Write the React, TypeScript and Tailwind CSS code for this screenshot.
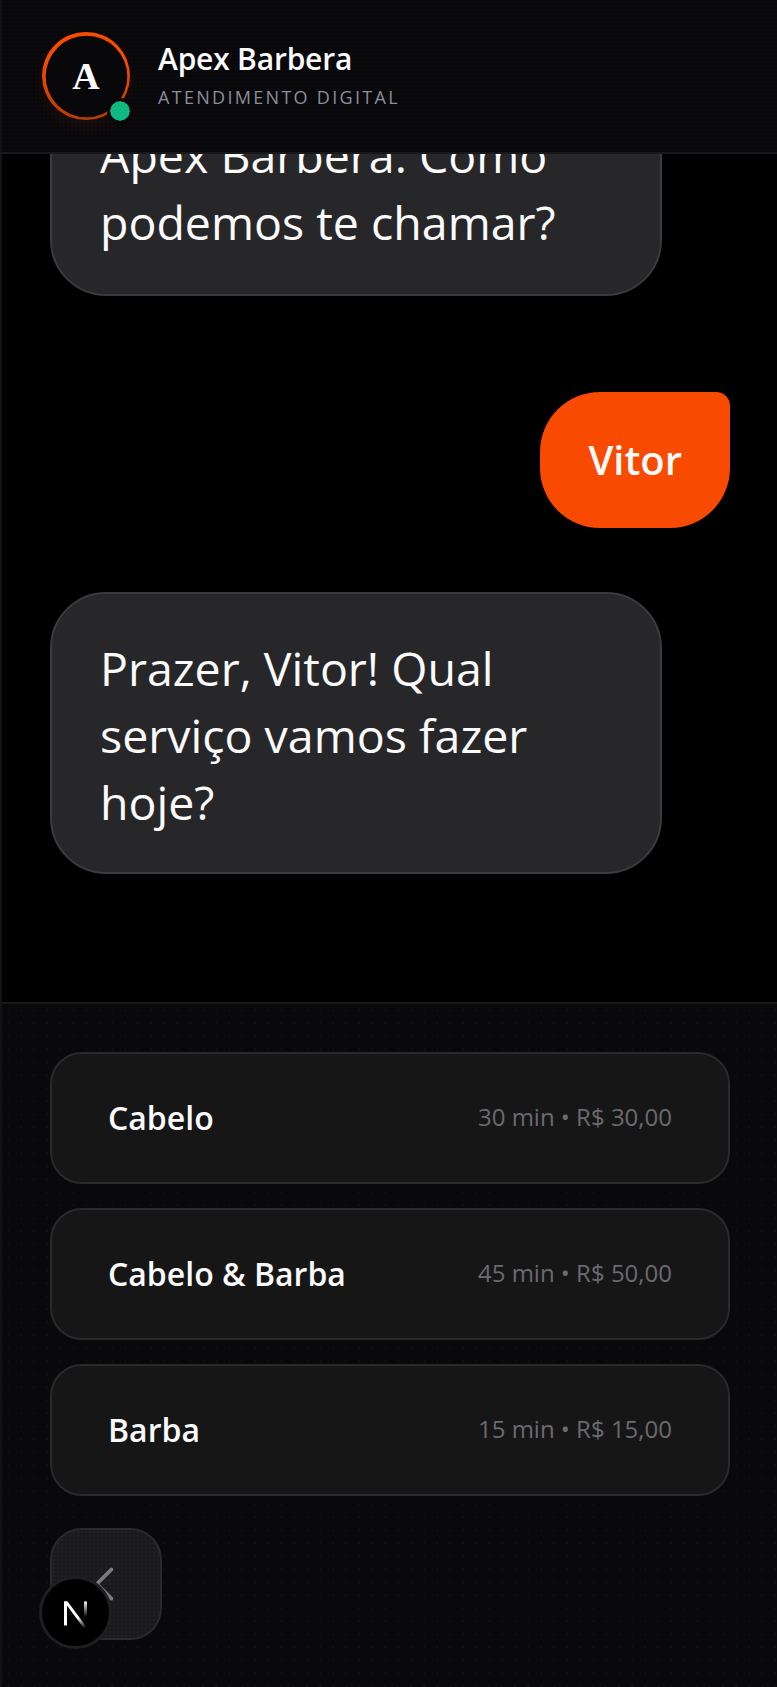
import React from "react";

const font = { fontFamily: '"Open Sans", sans-serif' };

const services = [
  { name: "Cabelo", info: "30 min • R$ 30,00" },
  { name: "Cabelo & Barba", info: "45 min • R$ 50,00" },
  { name: "Barba", info: "15 min • R$ 15,00" },
];

const NextBadge = () => (
  <div className="absolute left-[37px] top-[1576px] w-[73px] h-[73px] rounded-full bg-black border-[3px] border-[#1f1f22] flex items-center justify-center">
    <svg viewBox="0 0 36 36" className="w-[36px] h-[36px]" fill="none">
      <defs>
        <linearGradient id="ng" x1="14" y1="14" x2="27" y2="33" gradientUnits="userSpaceOnUse">
          <stop offset="0.45" stopColor="#fff" />
          <stop offset="1" stopColor="#fff" stopOpacity="0" />
        </linearGradient>
        <linearGradient id="ng2" x1="27" y1="6" x2="27" y2="22" gradientUnits="userSpaceOnUse">
          <stop stopColor="#fff" />
          <stop offset="1" stopColor="#fff" stopOpacity="0" />
        </linearGradient>
      </defs>
      <path d="M6 6.5h3v24h-3z" fill="#fff" />
      <path d="M6 6.5h3.6L30 34h-3.6z" fill="url(#ng)" />
      <rect x="26" y="6.5" width="3" height="16" fill="url(#ng2)" />
    </svg>
  </div>
);

export default function App() {
  return (
    <div className="relative w-[777px] h-[1687px] flex flex-col bg-black text-[#fafafa] overflow-hidden border-l-2 border-[#141416]" style={font}>
      {/* Header */}
      <header className="h-[154px] shrink-0 flex items-center gap-[28px] pl-[40px] bg-[#08080b] border-b-2 border-[#18181b] bg-[radial-gradient(#ffffff03_1px,transparent_1px)] bg-[size:4px_4px]">
        <div className="relative w-[88px] h-[88px] shrink-0 rounded-full shadow-[0_8px_20px_rgba(249,76,0,0.08)]">
          <svg viewBox="0 0 88 88" className="absolute inset-0 w-full h-full">
            <defs>
              <linearGradient id="ring" x1="44" y1="0" x2="44" y2="88" gradientUnits="userSpaceOnUse">
                <stop offset="0.3" stopColor="#f94c00" />
                <stop offset="1" stopColor="#b83a04" />
              </linearGradient>
            </defs>
            <circle cx="44" cy="44" r="44" fill="url(#ring)" />
            <circle cx="44.5" cy="44.5" r="40.8" fill="#08080b" />
          </svg>
          <span className="absolute inset-0 flex items-center justify-center text-[38px] font-bold" style={{ fontFamily: '"Liberation Serif", serif' }}>
            A
          </span>
          <span className="absolute right-0 bottom-[-1px] w-[20px] h-[20px] rounded-full bg-[#10b981] outline-[3px] outline-[#08080b]" />
        </div>
        <div className="flex flex-col">
          <span className="text-[30px] leading-[34px] font-semibold tracking-[-0.2px]">Apex Barbera</span>
          <span className="text-[18px] leading-[26px] tracking-[2.3px] text-[#8e8e98] mt-[8px]">ATENDIMENTO DIGITAL</span>
        </div>
      </header>

      {/* Chat */}
      <main className="flex-1 min-h-0 overflow-hidden flex flex-col justify-end gap-[64px] pl-[48px] pr-[47px] pb-[128px]">
        <div className="w-[612px] shrink-0 rounded-[56px] rounded-tl-[12px] bg-[#27272a] border-2 border-[#3a3a3f] px-[48px] pt-[38px] pb-[38px] text-[46.5px] leading-[67px]">
          Seja muito bem-vindo à Apex Barbera. Como podemos te chamar?
        </div>
        <div className="self-end mt-[32px] shrink-0 rounded-[60px] rounded-tr-[14px] bg-[#f84a00] px-[48px] h-[136px] flex items-center text-[40px] font-semibold">
          Vitor
        </div>
        <div className="w-[612px] shrink-0 rounded-[56px] bg-[#27272a] border-2 border-[#3a3a3f] px-[48px] pt-[41px] pb-[36px] text-[46.5px] leading-[67px]">
          Prazer, Vitor! Qual serviço vamos fazer hoje?
        </div>
      </main>

      {/* Options */}
      <footer className="h-[685px] shrink-0 bg-[#09090c] border-t-2 border-[#18181b] pt-[48px] pl-[48px] pr-[47px] flex flex-col gap-[24px] bg-[radial-gradient(#ffffff08_1px,transparent_1px)] bg-[size:13px_13px]">
        {services.map((s) => (
          <div key={s.name} className="h-[132px] shrink-0 flex items-center justify-between rounded-[32px] bg-[#161617] border-2 border-[#2a2a2d] pl-[56px] pr-[56px]">
            <span className="text-[32px] font-semibold">{s.name}</span>
            <span className="text-[24px] text-[#6a6a6f] pb-[2px]">{s.info}</span>
          </div>
        ))}
        <div className="w-[112px] h-[112px] shrink-0 mt-[8px] rounded-[32px] bg-[#1a1a1c] border-2 border-[#2a2a2d] flex items-center justify-center bg-[radial-gradient(#ffffff08_1px,transparent_1px)] bg-[size:4px_4px]">
          <svg viewBox="0 0 24 24" className="w-[44px] h-[44px]" fill="none" stroke="#7a7a7f" strokeWidth="2" strokeLinecap="round" strokeLinejoin="round">
            <path d="M15 4l-8 8 8 8" />
          </svg>
        </div>
      </footer>

      <NextBadge />
    </div>
  );
}
